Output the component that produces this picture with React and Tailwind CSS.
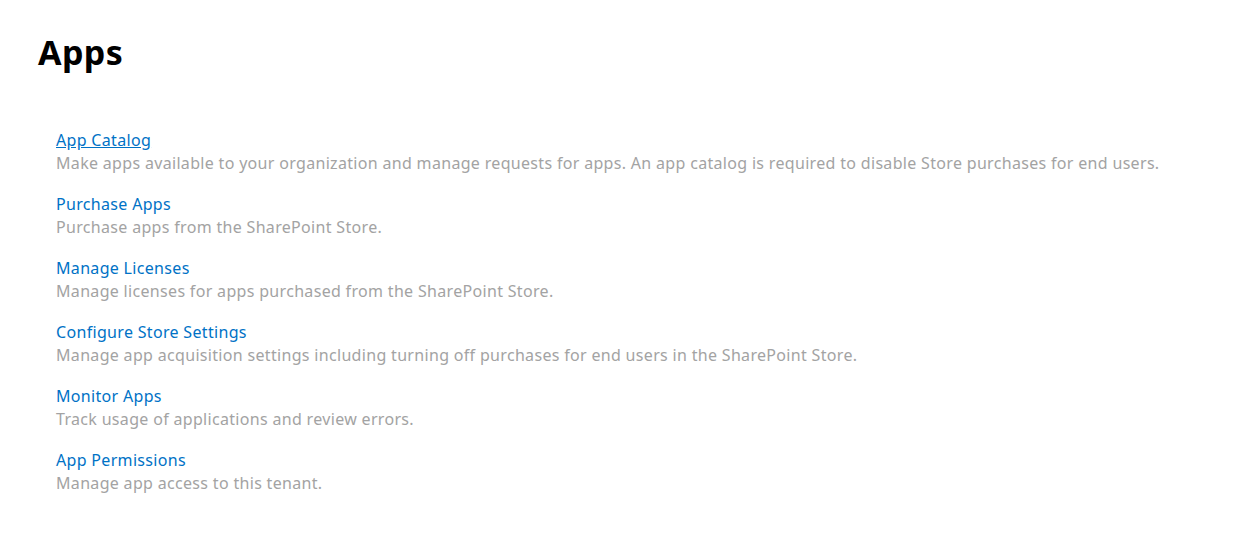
import React from 'react';

const items = [
  { title: 'App Catalog', desc: 'Make apps available to your organization and manage requests for apps. An app catalog is required to disable Store purchases for end users.', underline: true },
  { title: 'Purchase Apps', desc: 'Purchase apps from the SharePoint Store.' },
  { title: 'Manage Licenses', desc: 'Manage licenses for apps purchased from the SharePoint Store.' },
  { title: 'Configure Store Settings', desc: 'Manage app acquisition settings including turning off purchases for end users in the SharePoint Store.' },
  { title: 'Monitor Apps', desc: 'Track usage of applications and review errors.' },
  { title: 'App Permissions', desc: 'Manage app access to this tenant.' },
];

export default function App() {
  return (
    <div className="min-h-[547px] bg-white pl-[38px] pt-[32px] font-['Noto_Sans',sans-serif]">
      <h1 className="text-[34px] font-bold leading-[40px] tracking-[0.4px] text-black">Apps</h1>
      <ul className="mt-[57px] pl-[18px]">
        {items.map((item) => (
          <li key={item.title} className="mb-[18px]">
            <a
              href="#"
              className={`block w-fit text-[16px] leading-[23px] tracking-[0.32px] text-[#0072c6] ${item.underline ? 'underline' : ''}`}
            >
              {item.title}
            </a>
            <p className="text-[16px] leading-[23px] tracking-[0.32px] text-[#a3a3a3]">{item.desc}</p>
          </li>
        ))}
      </ul>
    </div>
  );
}
